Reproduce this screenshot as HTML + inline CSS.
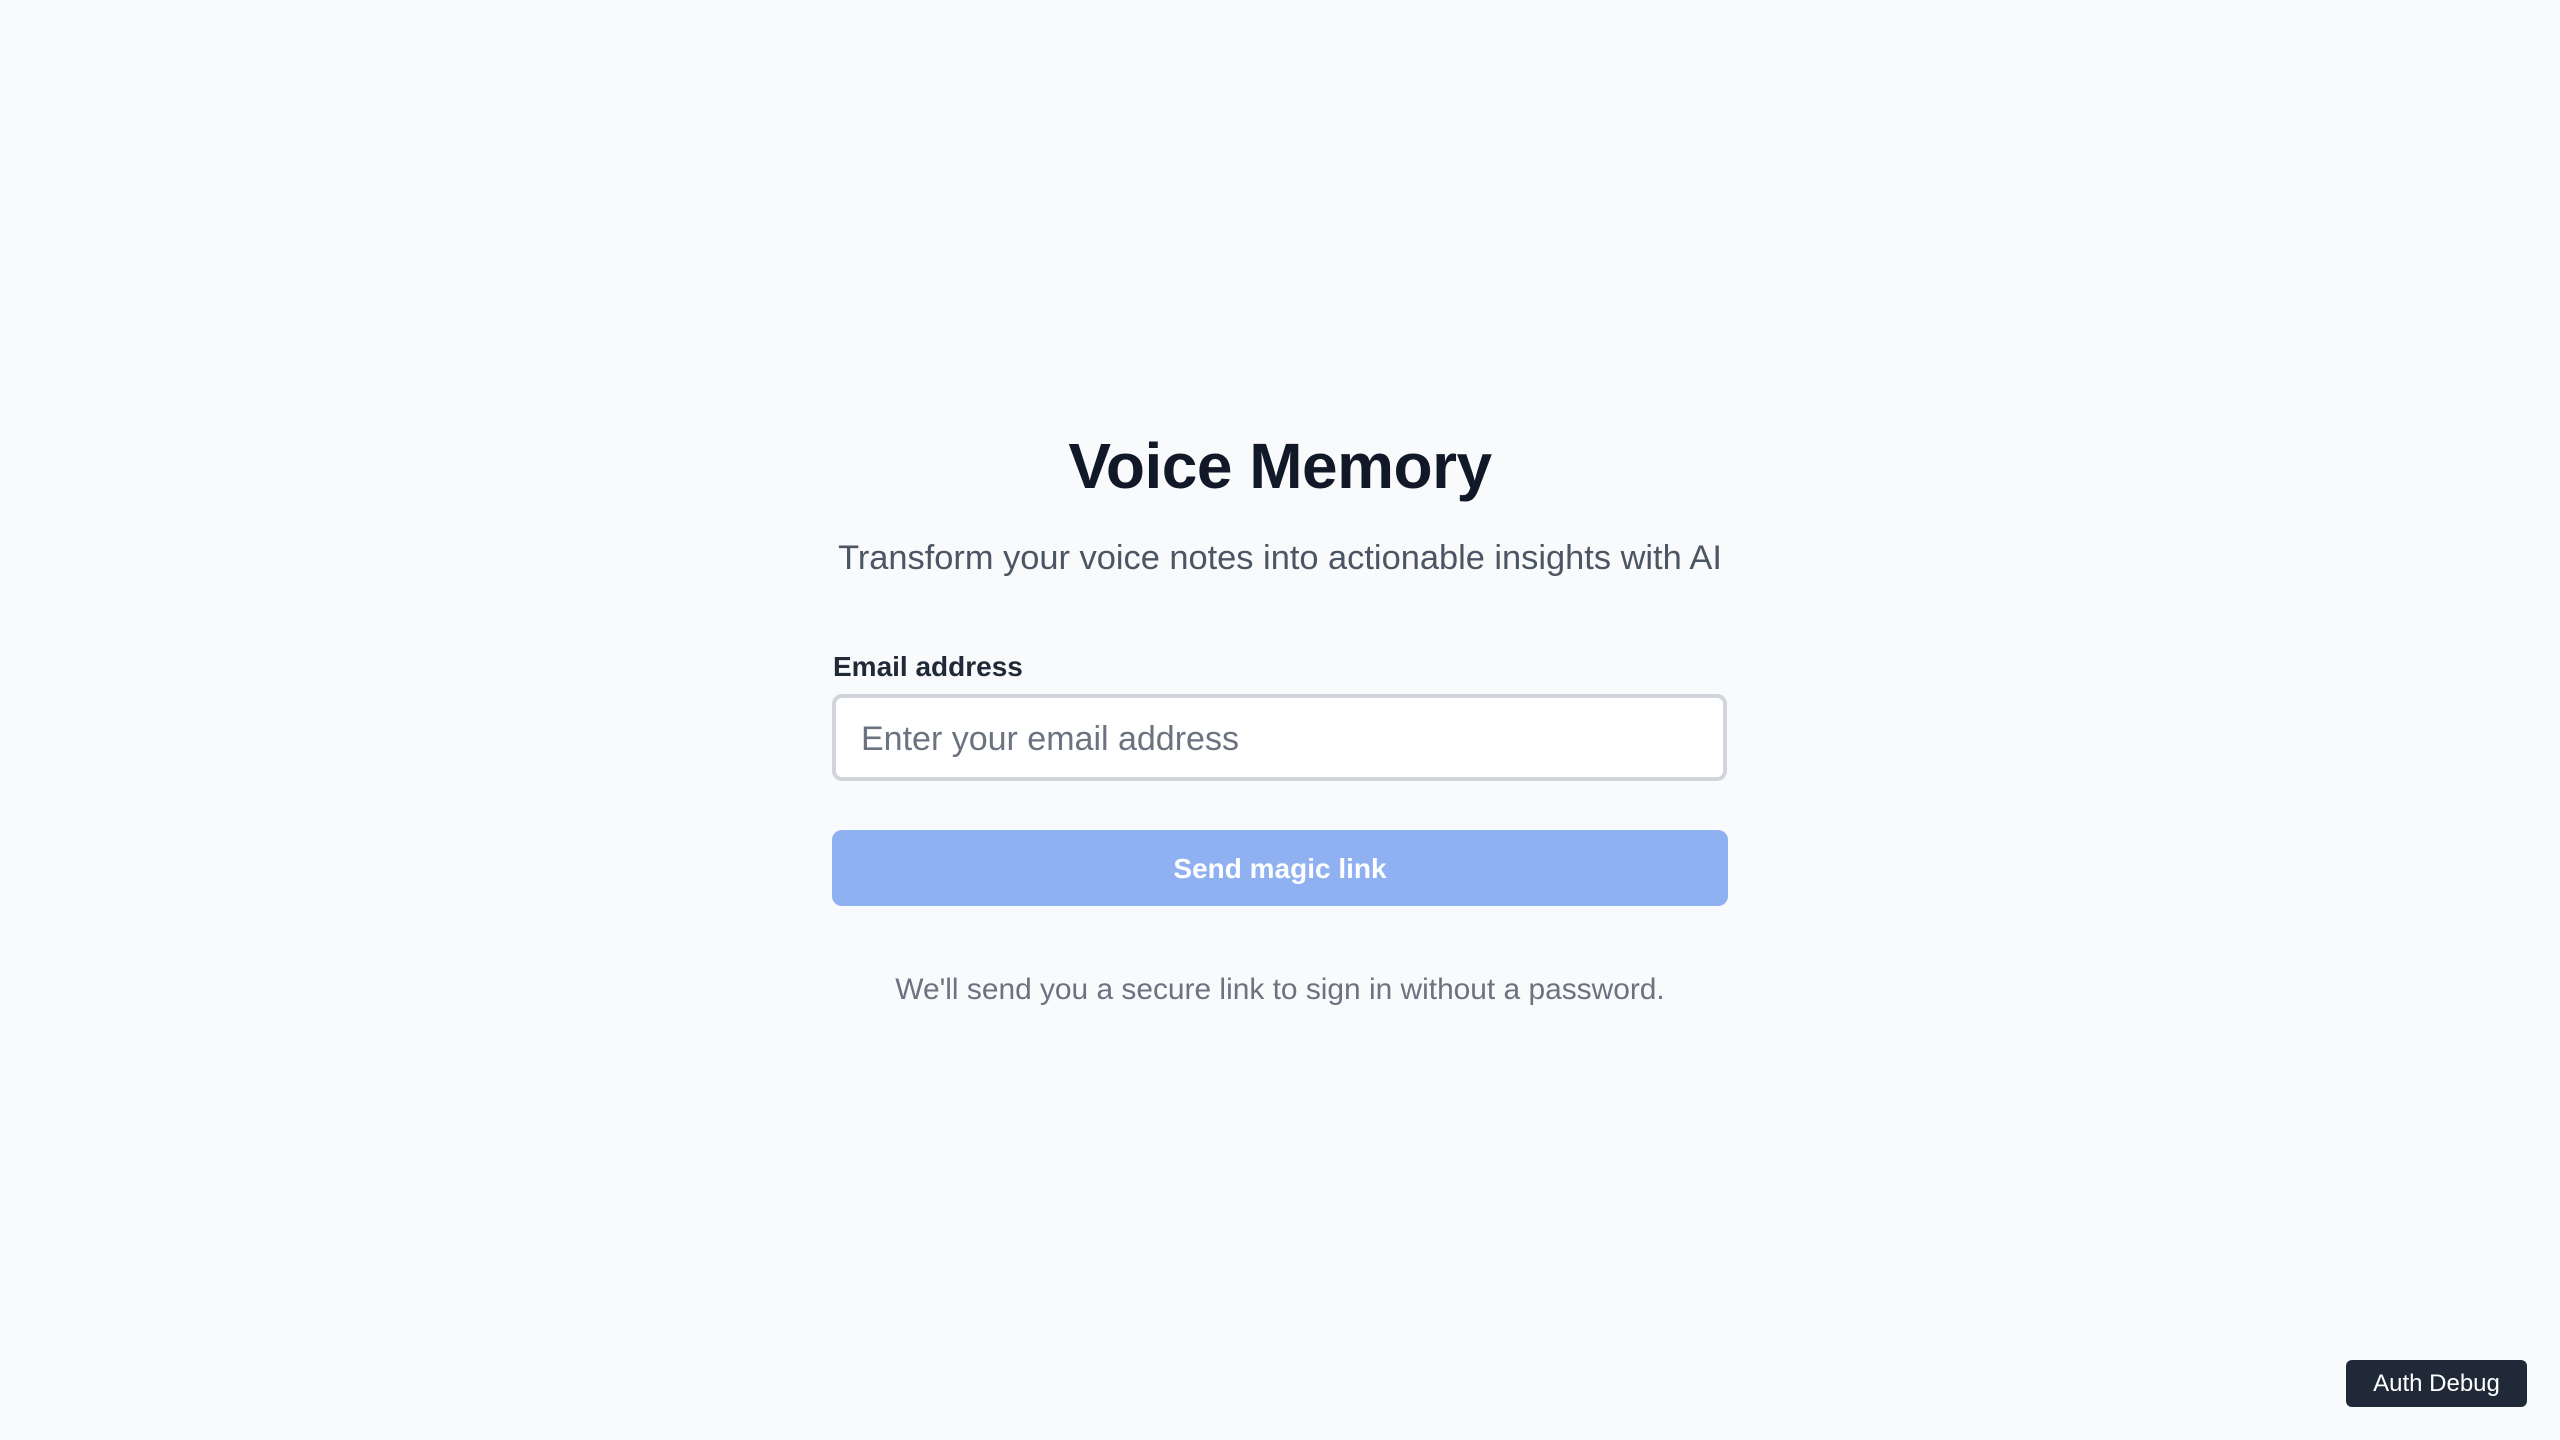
<!DOCTYPE html>
<html><head><meta charset="utf-8"><style>
html,body{margin:0;padding:0;width:2560px;height:1440px;background:#f9fafb;font-family:"Liberation Sans",sans-serif;overflow:hidden;position:relative}
.t{position:absolute;left:0;width:2560px;text-align:center;white-space:nowrap}
</style></head><body>
<div class="t" style="top:429px;font-size:64px;font-weight:bold;color:#111827;letter-spacing:-0.5px">Voice Memory</div>
<div class="t" style="top:539px;font-size:34.4px;color:#4b5563">Transform your voice notes into actionable insights with AI</div>
<div style="position:absolute;left:833px;top:651px;font-size:28px;font-weight:bold;color:#1f2937">Email address</div>
<div style="position:absolute;left:832px;top:694px;width:887px;height:79px;border:4px solid #d1d5db;border-radius:10px;background:#fff;box-sizing:content-box"></div>
<div style="position:absolute;left:861px;top:720px;font-size:34px;color:#6b7280">Enter your email address</div>
<div style="position:absolute;left:832px;top:830px;width:896px;height:76px;border-radius:10px;background:#8fb0f1;color:#fff;font-size:28px;font-weight:bold;text-align:center;line-height:77px">Send magic link</div>
<div class="t" style="top:973px;font-size:29.9px;color:#6b7280">We'll send you a secure link to sign in without a password.</div>
<div style="position:absolute;left:2346px;top:1360px;width:181px;height:47px;border-radius:6px;background:#1f2937;color:#fff;font-size:24px;text-align:center;line-height:47px">Auth Debug</div>
</body></html>
